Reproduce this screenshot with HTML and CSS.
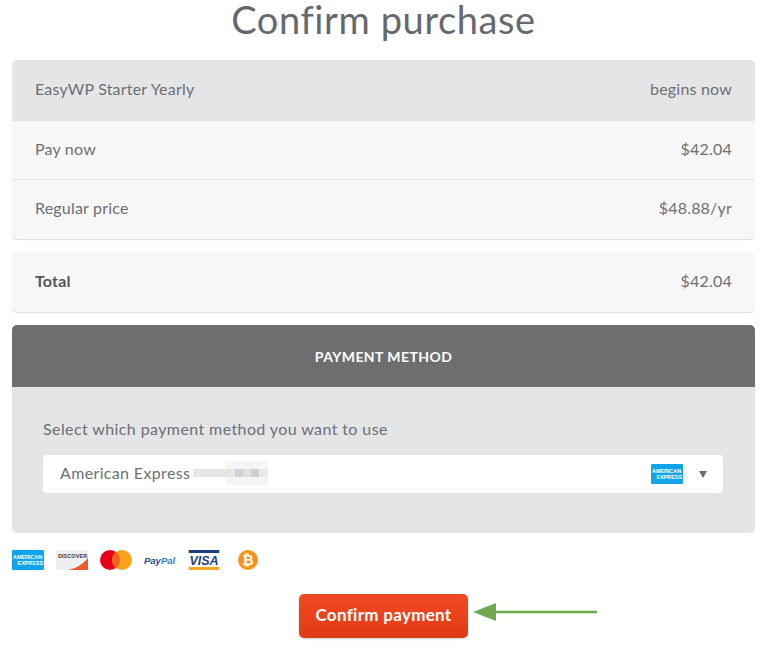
FILE: index.html
```html
<!DOCTYPE html>
<html lang="en">
<head>
<meta charset="utf-8">
<title>Confirm purchase</title>
<link rel="stylesheet" href="styles.css">
</head>
<body>
<main class="page">
  <h1 class="title">Confirm purchase</h1>
  <section class="card summary">
    <div class="row row-head"><span>EasyWP Starter Yearly</span><span>begins now</span></div>
    <div class="row row-line"><span>Pay now</span><span>$42.04</span></div>
    <div class="row"><span>Regular price</span><span>$48.88/yr</span></div>
  </section>
  <section class="card total">
    <div class="row"><strong>Total</strong><span>$42.04</span></div>
  </section>
  <section class="payment">
    <h2 class="payment-head">PAYMENT METHOD</h2>
    <div class="payment-body">
      <p class="payment-label">Select which payment method you want to use</p>
      <div class="select">
        <span class="select-text">American Express</span>
        <svg class="blur" width="75" height="24" viewBox="0 0 75 24">
          <rect x="0" y="8" width="33" height="8" fill="#e6e6e6"/>
          <rect x="33" y="0" width="42" height="24" fill="#f5f5f5"/>
          <rect x="33" y="8" width="9" height="8" fill="#e9e6e4"/>
          <rect x="42" y="8" width="8" height="8" fill="#d0d3d7"/>
          <rect x="50" y="8" width="8" height="8" fill="#e3e1df"/>
          <rect x="58" y="8" width="8" height="8" fill="#cfd0d2"/>
          <rect x="66" y="8" width="9" height="8" fill="#e8e8e8"/>
        </svg>
        <svg class="amex-select" width="32" height="20" viewBox="0 0 32 20">
          <rect width="32" height="20" rx="1" fill="#10a5e8"/>
          <text x="1" y="9" class="amex-text">AMERICAN</text>
          <text x="31" y="15" class="amex-text amex-end">EXPRESS</text>
        </svg>
        <span class="caret"></span>
      </div>
    </div>
  </section>
  <div class="cards">
    <svg width="32" height="20" viewBox="0 0 32 20">
      <rect width="32" height="20" rx="1" fill="#10a5e8"/>
      <text x="1" y="9" class="amex-text">AMERICAN</text>
      <text x="31" y="15" class="amex-text amex-end">EXPRESS</text>
    </svg>
    <svg width="32" height="20" viewBox="0 0 32 20">
      <rect width="32" height="20" rx="1" fill="#efefef"/>
      <path d="M32 8V19a1 1 0 0 1-1 1H13C21 18 28 13 32 8Z" fill="#ee5a2a"/>
      <text x="2" y="8" class="disc-text">DISCOVER</text>
    </svg>
    <svg width="32" height="20" viewBox="0 0 32 20">
      <circle cx="10" cy="10" r="10" fill="#e8001c"/>
      <circle cx="22" cy="10" r="10" fill="#f9a11b"/>
      <path d="M16 2a10 10 0 0 1 0 16a10 10 0 0 1 0-16Z" fill="#f26122"/>
    </svg>
    <svg width="32" height="20" viewBox="0 0 32 20">
      <text x="0" y="14" class="paypal-text"><tspan fill="#1d4f80">Pay</tspan><tspan fill="#2a86bb">Pal</tspan></text>
    </svg>
    <svg width="32" height="20" viewBox="0 0 32 20">
      <rect x="0.7" width="30.6" height="3" fill="#1b3f82"/>
      <rect x="0.7" y="17" width="30.6" height="3" fill="#f5a623"/>
      <text x="16" y="15" class="visa-text">VISA</text>
    </svg>
    <svg width="32" height="20" viewBox="0 0 32 20">
      <circle cx="16" cy="10" r="10" fill="#f7931a"/>
      <text x="16" y="15" class="btc-text">₿</text>
    </svg>
  </div>
  <div class="actions">
    <div class="action-wrap">
      <button class="confirm" type="button">Confirm payment</button>
      <svg class="arrow" width="126" height="20" viewBox="0 0 126 20">
        <path d="M23 10H125" stroke="#70a84f" stroke-width="2.4"/>
        <path d="M1 10L24 1V19Z" fill="#70a84f"/>
      </svg>
    </div>
  </div>
</main>
</body>
</html>
```
FILE: styles.css
```css
* { box-sizing: border-box; }
html, body { margin: 0; padding: 0; background: #fff; }
body {
  font-family: "Lato", "Noto Sans", sans-serif;
  color: #6e6f74;
  font-size: 16px;
}
.page { width: 767px; padding: 0 12px; height: 649px; overflow: hidden; }
.title {
  margin: 0 0 22px;
  height: 38px;
  line-height: 38px;
  text-align: center;
  font-size: 38px;
  font-weight: 400;
  letter-spacing: 0.6px;
  color: #66686f;
}
.card {
  background: #f7f7f7;
  border-radius: 5px;
  box-shadow: 0 1px 1px #dfdfdf;
  overflow: hidden;
}
.row {
  height: 59px;
  padding: 0 23px 4px;
  display: flex;
  justify-content: space-between;
  align-items: center;
  letter-spacing: 0.2px;
}
.row-head { height: 61px; background: #e4e5e7; }
.row-line { border-bottom: 1px solid #e4e4e4; }
.total { margin-top: 13px; }
.total .row { height: 60px; }
.total strong { font-weight: 700; color: #55565c; }
.payment {
  margin-top: 13px;
  border-radius: 5px;
  overflow: hidden;
  background: #e4e5e7;
  height: 208px;
}
.payment-head {
  margin: 0;
  height: 62px;
  background: #6d6e70;
  color: #fff;
  font-size: 14px;
  font-weight: 700;
  letter-spacing: 0.42px;
  display: flex;
  align-items: center;
  justify-content: center;
}
.payment-body { padding: 31px 32px 0 31px; }
.payment-label { margin: 0 0 16px; height: 21px; line-height: 21px; letter-spacing: 0.4px; }
.select {
  height: 38px;
  background: #fff;
  border-radius: 4px;
  display: flex;
  align-items: center;
  padding: 0 16px 0 17px;
}
.select-text { letter-spacing: 0.35px; margin-bottom: 4px; }
.blur { margin: 0 0 2px 3px; }
.amex-select { margin-left: auto; }
.caret {
  margin-left: 16px;
  width: 0;
  height: 0;
  border-left: 4.5px solid transparent;
  border-right: 4.5px solid transparent;
  border-top: 7px solid #6b6b70;
}
.amex-text { font: 700 5.4px "Liberation Sans", sans-serif; fill: #fff; }
.amex-end { text-anchor: end; }
.disc-text { font: 700 5.6px "Liberation Sans", sans-serif; fill: #444; }
.paypal-text { font: italic 700 9.5px "Liberation Sans", sans-serif; }
.visa-text { font: italic 700 12.5px "Liberation Sans", sans-serif; fill: #1b3f82; text-anchor: middle; }
.btc-text { font: 700 14px "DejaVu Sans", sans-serif; fill: #fff; text-anchor: middle; }
.cards {
  margin-top: 17px;
  display: flex;
  gap: 12px;
}
.cards svg { display: block; }
.actions { margin-top: 24px; display: flex; justify-content: center; }
.action-wrap { position: relative; }
.confirm {
  display: block;
  width: 169px;
  height: 44px;
  padding: 0 0 4px;
  border: 0;
  border-radius: 5px;
  background: linear-gradient(#f24a25, #e03a14);
  box-shadow: 0 1px 2px #c9c9c9;
  color: #fff;
  font: 700 17px "Lato", "Noto Sans", sans-serif;
  letter-spacing: 0.3px;
}
.arrow { position: absolute; left: 173px; top: 8px; }
```
